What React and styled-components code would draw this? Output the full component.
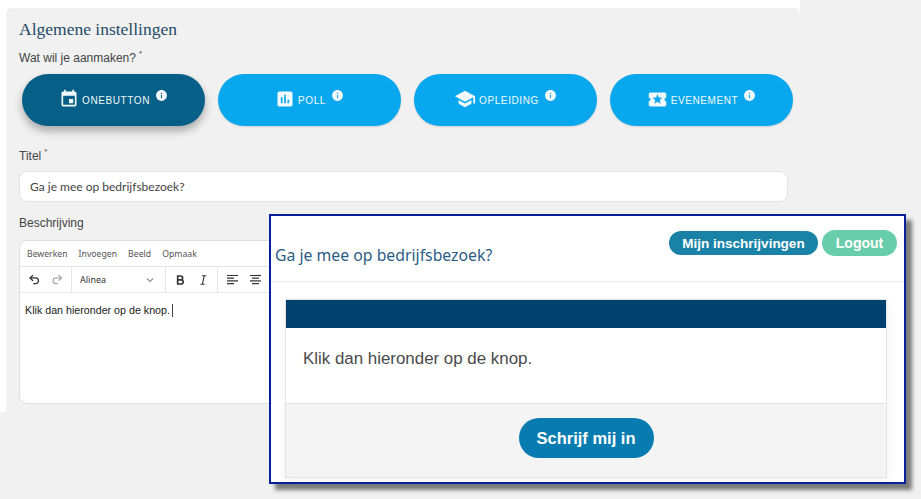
import React from "react";
import styled, { createGlobalStyle } from "styled-components";
import { MdEvent, MdPoll, MdSchool, MdLocalActivity, MdInfo, MdKeyboardArrowDown } from "react-icons/md";
import { LuUndo2, LuRedo2 } from "react-icons/lu";

const Global = createGlobalStyle`
  html, body { margin: 0; padding: 0; background: #f1f1f1; }
  * { box-sizing: border-box; }
`;
const sans = `"Liberation Sans", Arial, sans-serif`;
const noto = `"Noto Sans", "Open Sans", sans-serif`;

const Page = styled.div`
  position: relative; width: 921px; height: 499px; overflow: hidden; background: #f1f1f1;
  font-family: ${sans};
`;
const Sheet = styled.div`
  width: 800px; height: 412px; background: #fff; padding: 8px 0 0 6px;
`;
const Panel = styled.main`
  height: 100%; background: #f1f1f1; border-radius: 6px 6px 0 0; padding: 11px 12px 0 13px;
`;
const Heading = styled.h2`
  margin: 0; font: 400 17.5px/20px "Liberation Serif", "DejaVu Serif", serif; color: #254a68;
`;
const FieldLabel = styled.div`
  font-size: 12px; line-height: 14px; color: #444; margin-top: ${p => p.$mt}px;
  sup { font-size: 8px; line-height: 0; margin-left: 3px; position: relative; top: -1px; }
`;
const TypeRow = styled.div`
  display: flex; gap: 13px; margin: 9px 0 0 3px;
`;
const TypeButton = styled.button`
  flex: none; width: 183px; height: 52px; border: 0; border-radius: 26px; padding: 0 0 2px;
  display: flex; align-items: center; justify-content: center; color: #f2fafd;
  background: ${p => p.$active ? "#055f87" : "#09a7ee"};
  box-shadow: ${p => p.$active ? "0 5px 9px rgba(0,0,0,.3)" : "0 1px 2px rgba(0,0,0,.12)"};
  font: 400 10px ${sans}; letter-spacing: .6px; text-transform: uppercase;
  span { margin: 2px 2px 0 3px; }
  .info { margin: -7px 0 0 3px; }
`;
const TextInput = styled.div`
  height: 31px; margin: 8px 0 0; background: #fff; border: 1px solid #e4e4e4; border-radius: 8px;
  padding: 0 10px; display: flex; align-items: center; font: 400 12px Lato, ${noto}; color: #444;
`;
const Editor = styled.div`
  height: 164px; margin: 10px 0 0; background: #fff; border: 1px solid #e0e0e0; border-radius: 8px; overflow: hidden;
`;
const MenuBar = styled.div`
  height: 26px; display: flex; align-items: center; gap: 11px; padding: 0 7px; border-bottom: 1px solid #e6e6e6;
  font: 400 8.7px ${noto}; color: #555;
`;
const ToolBar = styled.div`
  height: 26px; display: flex; border-bottom: 1px solid #e6e6e6;
`;
const ToolGroup = styled.div`
  width: ${p => p.$w}px; display: flex; align-items: center; gap: ${p => p.$gap || 0}px;
  padding: 0 ${p => p.$pad ?? 8}px; border-right: 1px solid #e6e6e6; color: #333;
  justify-content: ${p => p.$between ? "space-between" : "flex-start"};
  font: 400 9px ${noto};
`;
const EditorBody = styled.div`
  padding: 10px 5px; font-size: 10.7px; line-height: 14px; color: #222;
  i { display: inline-block; width: 1px; height: 13px; background: #444; margin-left: 2px; vertical-align: -3px; }
`;
const Preview = styled.section`
  position: absolute; left: 269px; top: 214px; width: 637px; height: 270px; background: #fff;
  border: 2px solid #0a1fa0; box-shadow: 6px 6px 4px rgba(60,60,60,.65);
`;
const PreviewHead = styled.header`
  height: 66px; border-bottom: 1px solid #e8eef2; display: flex; justify-content: space-between;
  padding: 14px 7px 0 4px;
`;
const PreviewTitle = styled.h3`
  margin: 15px 0 0; font: 400 15.8px/20px ${noto}; color: #2b5d85;
`;
const HeadButtons = styled.div`
  display: flex; gap: 4px; align-items: flex-start;
`;
const Pill = styled.button`
  height: ${p => p.$h}px; width: ${p => p.$w}px; margin-top: ${p => p.$mt}px; border: 0; border-radius: 13px; padding: 0;
  background: ${p => p.$bg}; color: #fff; font: 700 ${p => p.$fs}px ${sans};
`;
const Card = styled.article`
  margin: 17px 17px 0 14px; height: 179px; border: 1px solid #e4e4e4; box-shadow: 0 2px 10px rgba(0,0,0,.06);
  display: flex; flex-direction: column;
`;
const CardBand = styled.div`
  height: 28px; background: #00416f; flex: none;
`;
const CardBody = styled.div`
  height: 76px; padding: 21px 17px; font-size: 16.9px; line-height: 20px; color: #4a4a4a; border-bottom: 1px solid #e2e2e2; flex: none;
`;
const CardFoot = styled.div`
  flex: 1; background: #f4f4f4; display: flex; justify-content: center; padding-top: 14px;
`;
const Enroll = styled.button`
  width: 135px; height: 40px; border: 0; border-radius: 20px; background: #087cb0; color: #fff; font: 700 16.5px ${sans}; padding: 0;
`;

const Bars = ({ lines }) => (
  <svg width="13" height="13" viewBox="0 0 13 13" fill="none" stroke="#333" strokeWidth="1.2">
    {lines.map(([a, b], i) => <path key={i} d={`M${a} ${2.5 + i * 2.7}H${b}`} />)}
  </svg>
);

const types = [
  { label: "OneButton", Icon: MdEvent, size: 20, active: true },
  { label: "Poll", Icon: MdPoll, size: 20 },
  { label: "Opleiding", Icon: MdSchool, size: 22 },
  { label: "Evenement", Icon: MdLocalActivity, size: 21 },
];

export default function App() {
  return (
    <Page>
      <Global />
      <Sheet>
        <Panel>
          <Heading>Algemene instellingen</Heading>
          <FieldLabel $mt={12}>Wat wil je aanmaken?<sup>*</sup></FieldLabel>
          <TypeRow>
            {types.map(({ label, Icon, size, active }) => (
              <TypeButton key={label} $active={active}>
                <Icon size={size} />
                <span>{label}</span>
                <MdInfo className="info" size={13} />
              </TypeButton>
            ))}
          </TypeRow>
          <FieldLabel $mt={23}>Titel<sup>*</sup></FieldLabel>
          <TextInput>Ga je mee op bedrijfsbezoek?</TextInput>
          <FieldLabel $mt={14}>Beschrijving</FieldLabel>
          <Editor>
            <MenuBar><span>Bewerken</span><span>Invoegen</span><span>Beeld</span><span>Opmaak</span></MenuBar>
            <ToolBar>
              <ToolGroup $w={52} $gap={10}><LuUndo2 size={15} strokeWidth={2.4} /><LuRedo2 size={15} color="#999" /></ToolGroup>
              <ToolGroup $w={94} $between>Alinea<MdKeyboardArrowDown size={14} color="#888" /></ToolGroup>
              <ToolGroup $w={52} $gap={16} $pad={10}>
                <svg width="10" height="12" viewBox="0 0 10 12" fill="none" stroke="#333" strokeWidth="2"><path d="M2 1.2v9.6M1 1.2h4.6a2.2 2.2 0 0 1 0 4.7H2h4.2a2.4 2.4 0 0 1 0 4.9H1" /></svg>
                <svg width="8" height="12" viewBox="0 0 8 12" fill="none" stroke="#333" strokeWidth="1.3"><path d="M2.5 1h5M.5 11h5M5 1 3 11" /></svg>
              </ToolGroup>
              <ToolGroup $w={60} $gap={10} $pad={8}>
                <Bars lines={[[1, 12], [1, 8], [1, 12], [1, 8]]} />
                <Bars lines={[[1, 12], [3, 10], [1, 12], [3, 10]]} />
              </ToolGroup>
            </ToolBar>
            <EditorBody>Klik dan hieronder op de knop.<i /></EditorBody>
          </Editor>
        </Panel>
      </Sheet>
      <Preview>
        <PreviewHead>
          <PreviewTitle>Ga je mee op bedrijfsbezoek?</PreviewTitle>
          <HeadButtons>
            <Pill $w={149} $h={24} $mt={1} $bg="#1a82a6" $fs={13.5}>Mijn inschrijvingen</Pill>
            <Pill $w={75} $h={26} $mt={0} $bg="#68cdaa" $fs={14}>Logout</Pill>
          </HeadButtons>
        </PreviewHead>
        <Card>
          <CardBand />
          <CardBody>Klik dan hieronder op de knop.</CardBody>
          <CardFoot><Enroll>Schrijf mij in</Enroll></CardFoot>
        </Card>
      </Preview>
    </Page>
  );
}
